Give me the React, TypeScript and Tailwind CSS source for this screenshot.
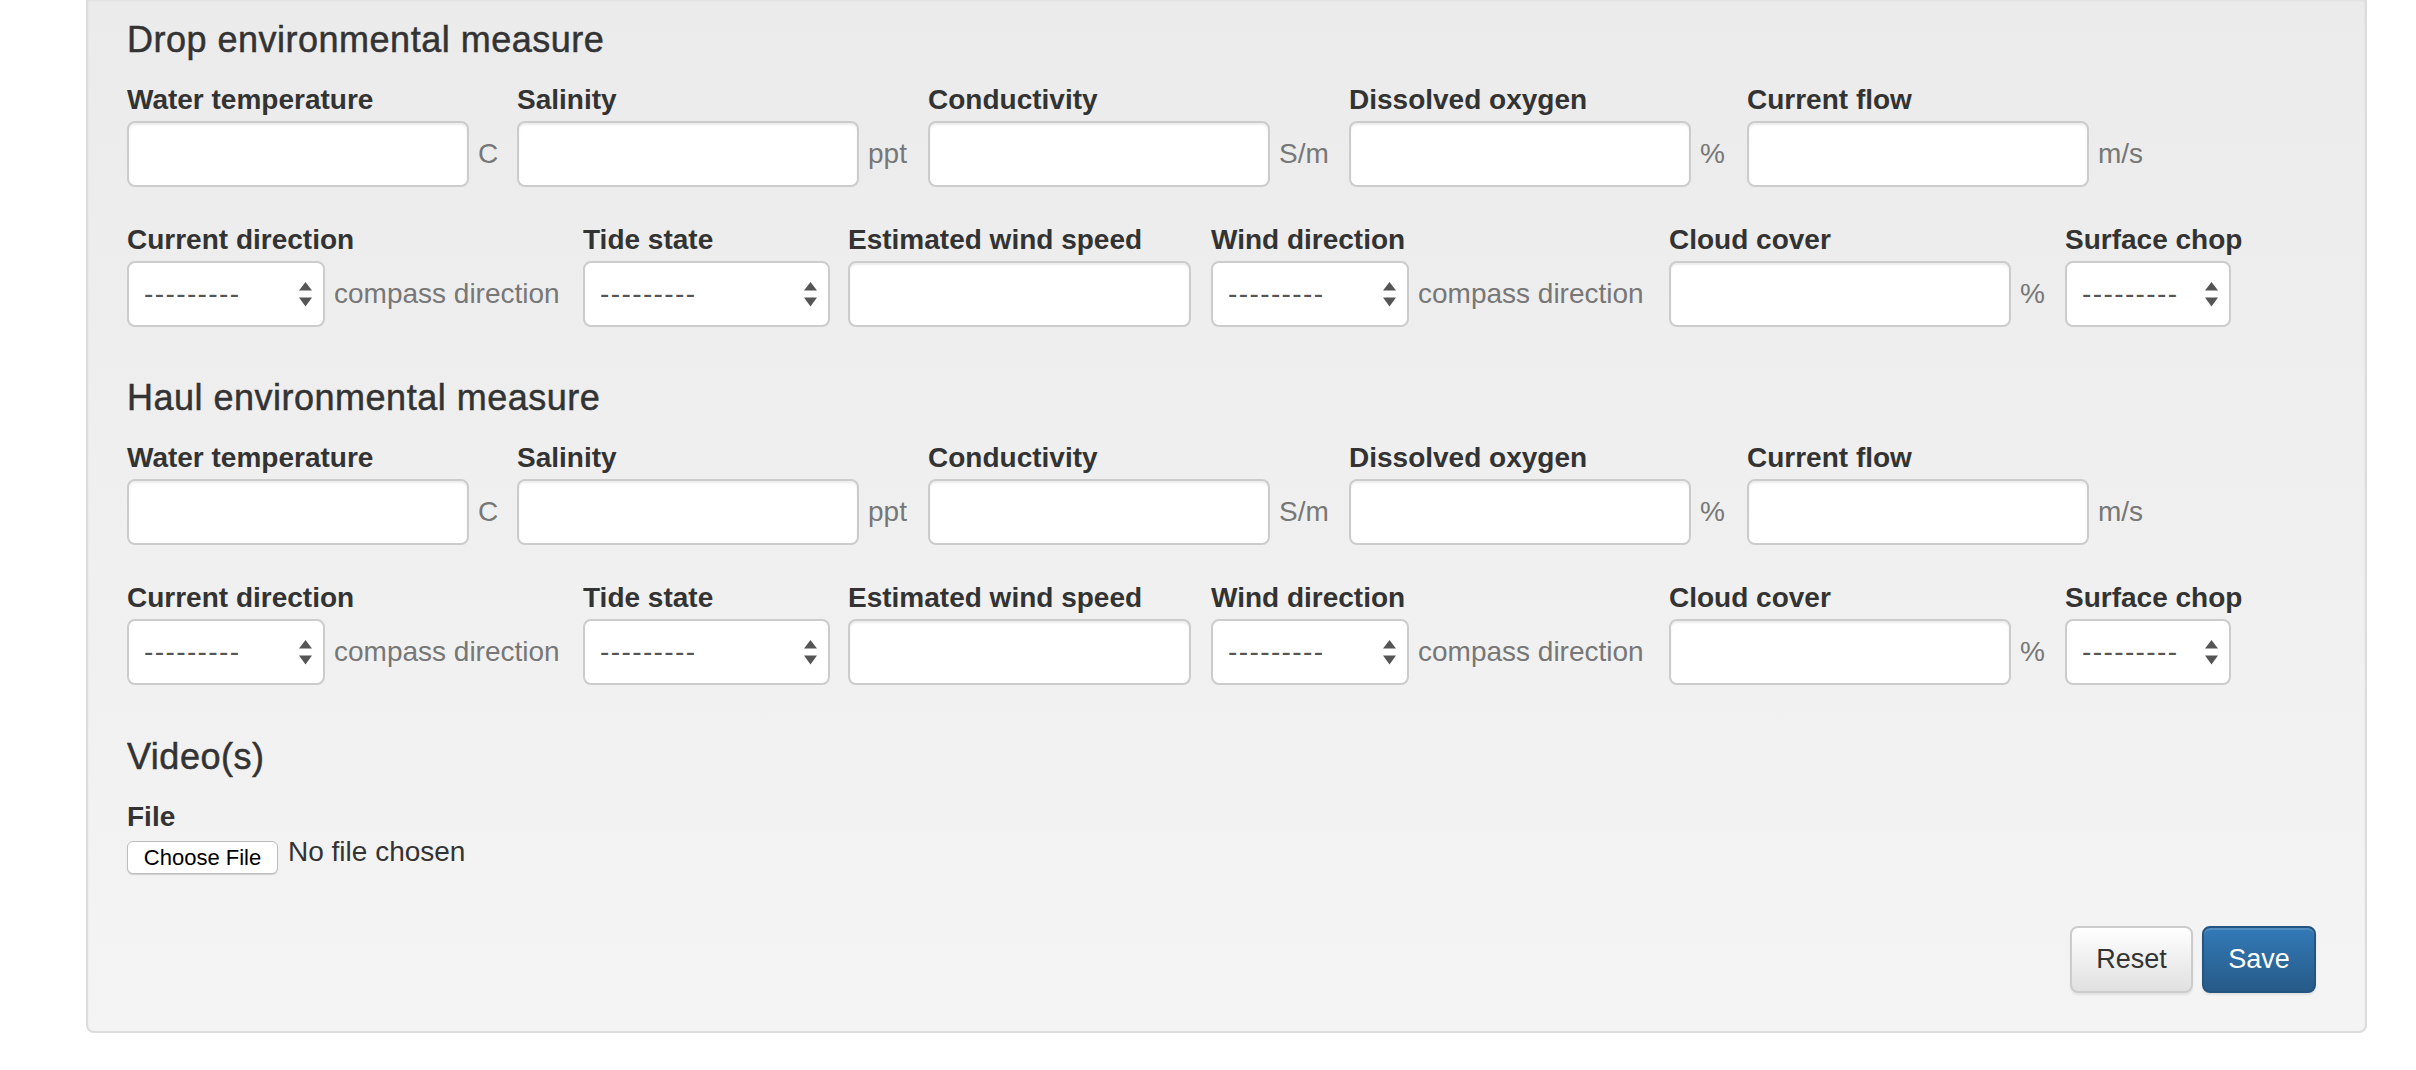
import React from "react";

const FONT = "font-['Liberation_Sans','Helvetica_Neue',Helvetica,Arial,sans-serif]";

function TextInput({ w = 342 }: { w?: number }) {
  return (
    <input
      type="text"
      style={{ width: w }}
      className="h-[66px] shrink-0 rounded-[8px] border-2 border-[#cccccc] bg-white shadow-[inset_0_2px_2px_rgba(0,0,0,0.075)] outline-none"
    />
  );
}

function Arrows() {
  return (
    <svg width="13" height="25" viewBox="0 0 13 25" className="shrink-0">
      <polygon points="6.5,0 13,8.5 0,8.5" fill="#555555" />
      <polygon points="0,15.5 13,15.5 6.5,24.5" fill="#555555" />
    </svg>
  );
}

function SelectBox({ w }: { w: number }) {
  return (
    <div
      style={{ width: w }}
      className="flex h-[66px] shrink-0 items-center justify-between rounded-[8px] border-2 border-[#cccccc] bg-white pl-[15px] pr-[11px]"
    >
      <span className="text-[28px] leading-[32px] tracking-[1.4px] text-[#555555]">---------</span>
      <Arrows />
    </div>
  );
}

function Field({
  label,
  w,
  children,
  unit,
}: {
  label: string;
  w?: number;
  children: React.ReactNode;
  unit?: string;
}) {
  return (
    <div className="flex shrink-0 flex-col" style={w ? { width: w } : undefined}>
      <label className="mb-[5px] whitespace-nowrap text-[28px] font-bold leading-[32px] text-[#333333]">
        {label}
      </label>
      <div className="flex items-center">
        {children}
        {unit && (
          <span className="ml-[9px] whitespace-nowrap text-[28px] leading-[32px] text-[#777777]">{unit}</span>
        )}
      </div>
    </div>
  );
}

function Heading({ children, className = "" }: { children: React.ReactNode; className?: string }) {
  return (
    <h3
      className={
        "text-[36px] font-normal leading-[40px] tracking-[0.5px] text-[#333333] [-webkit-text-stroke:0.5px_#333333] " +
        className
      }
    >
      {children}
    </h3>
  );
}

function MeasureSection({ title, className = "" }: { title: string; className?: string }) {
  return (
    <section className={className}>
      <Heading>{title}</Heading>
      <div className="mt-[24px] flex">
        <Field label="Water temperature" w={390} unit="C">
          <TextInput />
        </Field>
        <Field label="Salinity" w={411} unit="ppt">
          <TextInput />
        </Field>
        <Field label="Conductivity" w={421} unit="S/m">
          <TextInput />
        </Field>
        <Field label="Dissolved oxygen" w={398} unit="%">
          <TextInput />
        </Field>
        <Field label="Current flow" unit="m/s">
          <TextInput />
        </Field>
      </div>
      <div className="mt-[37px] flex">
        <Field label="Current direction" w={456} unit="compass direction">
          <SelectBox w={198} />
        </Field>
        <Field label="Tide state" w={265}>
          <SelectBox w={247} />
        </Field>
        <Field label="Estimated wind speed" w={363}>
          <TextInput w={343} />
        </Field>
        <Field label="Wind direction" w={458} unit="compass direction">
          <SelectBox w={198} />
        </Field>
        <Field label="Cloud cover" w={396} unit="%">
          <TextInput />
        </Field>
        <Field label="Surface chop">
          <SelectBox w={166} />
        </Field>
      </div>
    </section>
  );
}

export default function App() {
  return (
    <div className={"bg-white pb-[36px] " + FONT}>
      <div className="ml-[86px] w-[2281px] rounded-b-[8px] border-2 border-t-0 border-[#dcdcdc] bg-[linear-gradient(to_bottom,#ebebeb,#f4f4f4)] pb-[38px] pl-[39px] pr-[49px] pt-[20px] shadow-[inset_0_1px_3px_rgba(0,0,0,0.05)]">
        <MeasureSection title="Drop environmental measure" />
        <MeasureSection title="Haul environmental measure" className="mt-[51px]" />

        <section className="mt-[52px]">
          <Heading>Video(s)</Heading>
          <div className="mt-[24px] flex flex-col">
            <label className="mb-[5px] text-[28px] font-bold leading-[32px] text-[#333333]">File</label>
            <div className="flex items-start">
              <button
                type="button"
                className="mt-[3px] flex h-[33px] w-[151px] shrink-0 items-center justify-center rounded-[6px] border border-[#bdbdbd] bg-white text-[22px] leading-none text-black shadow-[0_1px_1px_rgba(0,0,0,0.15)]"
              >
                Choose File
              </button>
              <span className="ml-[10px] whitespace-nowrap text-[28px] leading-[28px] text-[#333333]">
                No file chosen
              </span>
            </div>
          </div>
        </section>

        <div className="mt-[52px] flex justify-end gap-[9px]">
          <button
            type="button"
            className="h-[67px] w-[123px] rounded-[8px] border-2 border-[#cccccc] bg-[linear-gradient(to_bottom,#ffffff,#e0e0e0)] text-[27px] text-[#333333] shadow-[inset_0_2px_0_rgba(255,255,255,0.15),0_2px_2px_rgba(0,0,0,0.075)]"
          >
            Reset
          </button>
          <button
            type="button"
            className="h-[67px] w-[114px] rounded-[8px] border-2 border-[#245580] bg-[linear-gradient(to_bottom,#337ab7,#265a88)] text-[27px] text-white shadow-[inset_0_2px_0_rgba(255,255,255,0.15),0_2px_2px_rgba(0,0,0,0.075)]"
          >
            Save
          </button>
        </div>
      </div>
    </div>
  );
}
